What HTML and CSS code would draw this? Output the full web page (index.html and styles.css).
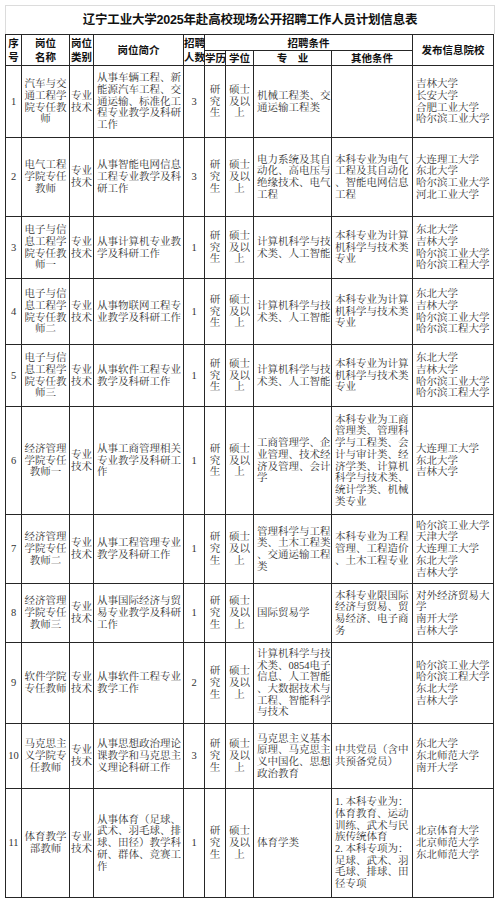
FILE: index.html
```html
<!DOCTYPE html>
<html lang="zh-CN">
<head>
<meta charset="utf-8">
<title>辽宁工业大学2025年赴高校现场公开招聘工作人员计划信息表</title>
<link rel="stylesheet" href="styles.css">
</head>
<body>
<div class="sheet">
  <div class="title">辽宁工业大学2025年赴高校现场公开招聘工作人员计划信息表</div>
  <table class="plan">
    <colgroup>
      <col class="c-no"><col class="c-name"><col class="c-type"><col class="c-desc"><col class="c-num">
      <col class="c-edu"><col class="c-deg"><col class="c-major"><col class="c-other"><col class="c-school">
    </colgroup>
    <thead>
      <tr class="hr1">
        <th rowspan="2">序<br>号</th>
        <th rowspan="2">岗位<br>名称</th>
        <th rowspan="2" class="tight">岗位<br>类别</th>
        <th rowspan="2">岗位简介</th>
        <th rowspan="2" class="tight">招聘<br>人数</th>
        <th colspan="4">招聘条件</th>
        <th rowspan="2">发布信息院校</th>
      </tr>
      <tr class="hr2">
        <th class="tight">学历</th>
        <th class="tight">学位</th>
        <th>专　业</th>
        <th>其他条件</th>
      </tr>
    </thead>
    <tbody>
      <tr class="r1">
        <td class="ctr">1</td>
        <td class="ctr">汽车与交<br>通工程学<br>院专任教<br>师</td>
        <td class="ctr tight">专业<br>技术</td>
        <td>从事车辆工程、新<br>能源汽车工程、交<br>通运输、标准化工<br>程专业教学及科研<br>工作</td>
        <td class="ctr">3</td>
        <td class="ctr tight">研<br>究<br>生</td>
        <td class="ctr tight">硕士<br>及以<br>上</td>
        <td>机械工程类、交<br>通运输工程类</td>
        <td></td>
        <td>吉林大学<br>长安大学<br>合肥工业大学<br>哈尔滨工业大学</td>
      </tr>
      <tr class="r2">
        <td class="ctr">2</td>
        <td class="ctr">电气工程<br>学院专任<br>教师</td>
        <td class="ctr tight">专业<br>技术</td>
        <td>从事智能电网信息<br>工程专业教学及科<br>研工作</td>
        <td class="ctr">3</td>
        <td class="ctr tight">研<br>究<br>生</td>
        <td class="ctr tight">硕士<br>及以<br>上</td>
        <td>电力系统及其自<br>动化、高电压与<br>绝缘技术、电气<br>工程</td>
        <td>本科专业为电气<br>工程及其自动化<br>、智能电网信息<br>工程</td>
        <td>大连理工大学<br>东北大学<br>哈尔滨工业大学<br>河北工业大学</td>
      </tr>
      <tr class="r3">
        <td class="ctr">3</td>
        <td class="ctr">电子与信<br>息工程学<br>院专任教<br>师一</td>
        <td class="ctr tight">专业<br>技术</td>
        <td>从事计算机专业教<br>学及科研工作</td>
        <td class="ctr">1</td>
        <td class="ctr tight">研<br>究<br>生</td>
        <td class="ctr tight">硕士<br>及以<br>上</td>
        <td>计算机科学与技<br>术类、人工智能</td>
        <td>本科专业为计算<br>机科学与技术类<br>专业</td>
        <td>东北大学<br>吉林大学<br>哈尔滨工业大学<br>哈尔滨工程大学</td>
      </tr>
      <tr class="r4">
        <td class="ctr">4</td>
        <td class="ctr">电子与信<br>息工程学<br>院专任教<br>师二</td>
        <td class="ctr tight">专业<br>技术</td>
        <td>从事物联网工程专<br>业教学及科研工作</td>
        <td class="ctr">1</td>
        <td class="ctr tight">研<br>究<br>生</td>
        <td class="ctr tight">硕士<br>及以<br>上</td>
        <td>计算机科学与技<br>术类、人工智能</td>
        <td>本科专业为计算<br>机科学与技术类<br>专业</td>
        <td>东北大学<br>吉林大学<br>哈尔滨工业大学<br>哈尔滨工程大学</td>
      </tr>
      <tr class="r5">
        <td class="ctr">5</td>
        <td class="ctr">电子与信<br>息工程学<br>院专任教<br>师三</td>
        <td class="ctr tight">专业<br>技术</td>
        <td>从事软件工程专业<br>教学及科研工作</td>
        <td class="ctr">1</td>
        <td class="ctr tight">研<br>究<br>生</td>
        <td class="ctr tight">硕士<br>及以<br>上</td>
        <td>计算机科学与技<br>术类、人工智能</td>
        <td>本科专业为计算<br>机科学与技术类<br>专业</td>
        <td>东北大学<br>吉林大学<br>哈尔滨工业大学<br>哈尔滨工程大学</td>
      </tr>
      <tr class="r6">
        <td class="ctr">6</td>
        <td class="ctr">经济管理<br>学院专任<br>教师一</td>
        <td class="ctr tight">专业<br>技术</td>
        <td>从事工商管理相关<br>专业教学及科研工<br>作</td>
        <td class="ctr">1</td>
        <td class="ctr tight">研<br>究<br>生</td>
        <td class="ctr tight">硕士<br>及以<br>上</td>
        <td>工商管理学、企<br>业管理、技术经<br>济及管理、会计<br>学</td>
        <td>本科专业为工商<br>管理类、管理科<br>学与工程类、会<br>计与审计类、经<br>济学类、计算机<br>科学与技术类、<br>统计学类、机械<br>类专业</td>
        <td>大连理工大学<br>东北大学<br>吉林大学</td>
      </tr>
      <tr class="r7">
        <td class="ctr">7</td>
        <td class="ctr">经济管理<br>学院专任<br>教师二</td>
        <td class="ctr tight">专业<br>技术</td>
        <td>从事工程管理专业<br>教学及科研工作</td>
        <td class="ctr">1</td>
        <td class="ctr tight">研<br>究<br>生</td>
        <td class="ctr tight">硕士<br>及以<br>上</td>
        <td>管理科学与工程<br>类、土木工程类<br>、交通运输工程<br>类</td>
        <td>本科专业为工程<br>管理、工程造价<br>、土木工程专业</td>
        <td>哈尔滨工业大学<br>天津大学<br>大连理工大学<br>东北大学<br>吉林大学</td>
      </tr>
      <tr class="r8">
        <td class="ctr">8</td>
        <td class="ctr">经济管理<br>学院专任<br>教师三</td>
        <td class="ctr tight">专业<br>技术</td>
        <td>从事国际经济与贸<br>易专业教学及科研<br>工作</td>
        <td class="ctr">1</td>
        <td class="ctr tight">研<br>究<br>生</td>
        <td class="ctr tight">硕士<br>及以<br>上</td>
        <td>国际贸易学</td>
        <td>本科专业限国际<br>经济与贸易、贸<br>易经济、电子商<br>务</td>
        <td>对外经济贸易大<br>学<br>南开大学<br>吉林大学</td>
      </tr>
      <tr class="r9">
        <td class="ctr">9</td>
        <td class="ctr">软件学院<br>专任教师</td>
        <td class="ctr tight">专业<br>技术</td>
        <td>从事软件工程专业<br>教学工作</td>
        <td class="ctr">2</td>
        <td class="ctr tight">研<br>究<br>生</td>
        <td class="ctr tight">硕士<br>及以<br>上</td>
        <td>计算机科学与技<br>术类、0854电子<br>信息、人工智能<br>、大数据技术与<br>工程、智能科学<br>与技术</td>
        <td></td>
        <td>哈尔滨工业大学<br>哈尔滨工程大学<br>东北大学<br>吉林大学</td>
      </tr>
      <tr class="r10">
        <td class="ctr tight">10</td>
        <td class="ctr">马克思主<br>义学院专<br>任教师</td>
        <td class="ctr tight">专业<br>技术</td>
        <td>从事思想政治理论<br>课教学和马克思主<br>义理论科研工作</td>
        <td class="ctr">3</td>
        <td class="ctr tight">研<br>究<br>生</td>
        <td class="ctr tight">硕士<br>及以<br>上</td>
        <td>马克思主义基本<br>原理、马克思主<br>义中国化、思想<br>政治教育</td>
        <td>中共党员（含中<br>共预备党员）</td>
        <td>东北大学<br>东北师范大学<br>南开大学</td>
      </tr>
      <tr class="r11">
        <td class="ctr tight">11</td>
        <td class="ctr">体育教学<br>部教师</td>
        <td class="ctr tight">专业<br>技术</td>
        <td>从事体育（足球、<br>武术、羽毛球、排<br>球、田径）教学科<br>研、群体、竞赛工<br>作</td>
        <td class="ctr">1</td>
        <td class="ctr tight">研<br>究<br>生</td>
        <td class="ctr tight">硕士<br>及以<br>上</td>
        <td>体育学类</td>
        <td>1. 本科专业为：<br>体育教育、运动<br>训练、武术与民<br>族传统体育<br>2. 本科专项为：<br>足球、武术、羽<br>毛球、排球、田<br>径专项</td>
        <td>北京体育大学<br>北京师范大学<br>东北师范大学</td>
      </tr>
    </tbody>
  </table>
</div>
</body>
</html>
```
FILE: styles.css
```css
html, body {
  margin: 0;
  padding: 0;
  background: #ffffff;
}

body {
  padding: 5px 0 0 5px;
  font-family: "Liberation Serif", "Noto Serif CJK SC", "Noto Sans CJK SC", serif;
  color: #333333;
}

.sheet {
  width: 490px;
}

.title {
  height: 28px;
  border: 1px solid #dcdcdc;
  border-bottom: none;
  text-align: center;
  font-family: "Liberation Sans", "Noto Sans CJK SC", sans-serif;
  font-weight: 700;
  font-size: 12.5px;
  line-height: 28px;
  letter-spacing: -0.2px;
  color: #111111;
}

.plan {
  border-collapse: collapse;
  table-layout: fixed;
  width: 488px;
}

.c-no { width: 16px; }
.c-name { width: 48px; }
.c-type { width: 24px; }
.c-desc { width: 90px; }
.c-num { width: 21px; }
.c-edu { width: 21px; }
.c-deg { width: 28px; }
.c-major { width: 78px; }
.c-other { width: 81px; }
.c-school { width: 81px; }

.plan th,
.plan td {
  border: 1px solid #262626;
  padding: 0 2px 0 3px;
  font-size: 10.5px;
  line-height: 11.7px;
  white-space: nowrap;
  overflow: visible;
  vertical-align: middle;
  text-align: left;
}

.plan th {
  font-family: "Liberation Sans", "Noto Sans CJK SC", sans-serif;
  font-weight: 700;
  color: #111111;
  text-align: center;
  padding: 0;
  line-height: 14px;
}

.plan td.ctr {
  text-align: center;
  padding: 0 1px;
}

.plan .tight {
  padding: 0;
}

.hr1 { height: 16px; }
.hr2 { height: 14px; }

.r1 { height: 72px; }
.r2 { height: 79px; }
.r3 { height: 62px; }
.r4 { height: 66px; }
.r5 { height: 62px; }
.r6 { height: 108px; }
.r7 { height: 69px; }
.r8 { height: 59px; }
.r9 { height: 81px; }
.r10 { height: 65px; }
.r11 { height: 109px; }
```
